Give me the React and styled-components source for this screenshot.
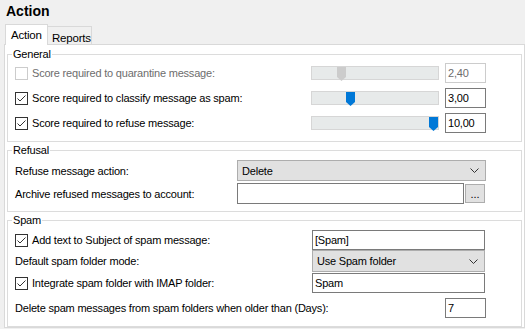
import styled, { createGlobalStyle } from "styled-components";

const GlobalStyle = createGlobalStyle`
  body {
    margin: 0;
    background: #f0f0f0;
    font-family: "Liberation Sans", Arial, sans-serif;
    font-size: 11px;
    letter-spacing: -0.2px;
    color: #000;
  }
`;

const Page = styled.div`
  width: 525px;
  height: 329px;
  overflow: hidden;
`;

const Title = styled.h1`
  margin: 0;
  height: 24px;
  box-sizing: border-box;
  padding: 2px 0 0 6px;
  font-size: 14px;
  font-weight: bold;
  letter-spacing: 0;
  line-height: 18px;
`;

const TabStrip = styled.div`
  display: flex;
  align-items: flex-end;
  height: 20px;
  margin-left: 5px;
`;

const Tab = styled.div`
  position: relative;
  z-index: ${(p) => (p.$active ? 1 : 0)};
  box-sizing: border-box;
  width: ${(p) => p.$w}px;
  height: ${(p) => (p.$active ? 21 : 18)}px;
  margin-bottom: ${(p) => (p.$active ? -1 : 0)}px;
  padding: ${(p) => (p.$active ? "3px 0 0 5px" : "4px 0 0 4px")};
  border: 1px solid #d9d9d9;
  border-bottom: none;
  border-left: ${(p) => (p.$active ? "1px solid #d9d9d9" : "none")};
  background: ${(p) => (p.$active ? "#ffffff" : "#f0f0f0")};
  font-size: 11.5px;
  line-height: 14px;
`;

const Panel = styled.div`
  margin-left: 4px;
  border: 1px solid #d9d9d9;
  background: #ffffff;
  padding: 2px 2px 0 2px;
  display: flex;
  flex-direction: column;
  gap: 1px;
`;

const Group = styled.fieldset`
  margin: 0;
  border: 1px solid #dcdcdc;
  padding: ${(p) => p.$pt}px 35px ${(p) => p.$pb}px 7px;
  min-width: 0;
`;

const Legend = styled.legend`
  margin-left: -3px;
  padding: 0 1px;
  line-height: 14px;
`;

const Rows = styled.div`
  display: flex;
  flex-direction: column;
  gap: ${(p) => p.$gap || 0}px;
`;

const Row = styled.div`
  display: flex;
  align-items: center;
  height: ${(p) => p.$h || 20}px;
  margin-top: ${(p) => p.$mt || 0}px;
`;

const Label = styled.div`
  display: flex;
  align-items: center;
  gap: 4px;
  flex: ${(p) => (p.$w ? "none" : 1)};
  width: ${(p) => (p.$w ? `${p.$w}px` : "auto")};
  white-space: nowrap;
  color: ${(p) => (p.$disabled ? "#6d6d6d" : "#000000")};
`;

const Box = styled.span`
  box-sizing: border-box;
  display: flex;
  width: 13px;
  height: 13px;
  flex: none;
  border: 1px solid ${(p) => (p.$disabled ? "#cccccc" : "#333333")};
  background: #ffffff;
`;

const TextBox = styled.div`
  box-sizing: border-box;
  display: flex;
  align-items: center;
  width: ${(p) => (p.$w ? `${p.$w}px` : "auto")};
  flex: ${(p) => (p.$w ? "none" : 1)};
  height: ${(p) => p.$h || 20}px;
  padding: 0 2px;
  margin-right: ${(p) => p.$mr || 0}px;
  border: 1px solid ${(p) => (p.$disabled ? "#cccccc" : "#7a7a7a")};
  background: #ffffff;
  color: ${(p) => (p.$disabled ? "#6d6d6d" : "#000000")};
`;

const Select = styled.div`
  box-sizing: border-box;
  display: flex;
  align-items: center;
  justify-content: space-between;
  flex: 1;
  height: ${(p) => p.$h}px;
  padding: 0 6px 0 4px;
  margin-right: ${(p) => p.$mr || 0}px;
  border: 1px solid #adadad;
  background: #e1e1e1;
`;

const Browse = styled.div`
  box-sizing: border-box;
  display: flex;
  align-items: flex-end;
  justify-content: center;
  width: 20px;
  height: 19px;
  margin-left: 1px;
  margin-right: 1px;
  padding-bottom: 3px;
  border: 1px solid #adadad;
  background: #e1e1e1;
  line-height: 10px;
  letter-spacing: 0;
`;

const Track = styled.div`
  position: relative;
  box-sizing: border-box;
  width: 128px;
  height: 14px;
  margin-right: 6px;
  border: 1px solid #d6d6d6;
  background: #e7eaea;
`;

const Thumb = styled.svg`
  position: absolute;
  top: 0;
`;

function CheckBox({ checked, disabled }) {
  return (
    <Box $disabled={disabled}>
      {checked && (
        <svg width="11" height="11" viewBox="0 0 11 11">
          <polyline points="1.5,5.5 4,8 9.5,2.5" fill="none" stroke="#333333" strokeWidth="1" />
        </svg>
      )}
    </Box>
  );
}

function Slider({ pos, disabled }) {
  return (
    <Track>
      <Thumb width="9" height="14" viewBox="0 0 9 14" style={{ left: pos }}>
        <polygon points="0,0 9,0 9,10 4.5,14 0,10" fill={disabled ? "#cccccc" : "#0078d7"} />
      </Thumb>
    </Track>
  );
}

function Chevron() {
  return (
    <svg width="9" height="5" viewBox="0 0 9 5">
      <polyline points="0.5,0.5 4.5,4.5 8.5,0.5" fill="none" stroke="#333333" strokeWidth="1" />
    </svg>
  );
}

const scores = [
  { label: "Score required to quarantine message:", value: "2,40", pos: 25, checked: false, disabled: true },
  { label: "Score required to classify message as spam:", value: "3,00", pos: 34, checked: true },
  { label: "Score required to refuse message:", value: "10,00", pos: 117, checked: true },
];

export default function App() {
  return (
    <Page>
      <GlobalStyle />
      <Title>Action</Title>
      <TabStrip>
        <Tab $active $w={43}>Action</Tab>
        <Tab $w={44}>Reports</Tab>
      </TabStrip>
      <Panel>
        <Group $pt={2} $pb={8}>
          <Legend>General</Legend>
          <Rows $gap={5}>
            {scores.map((s) => (
              <Row key={s.label}>
                <Label $disabled={s.disabled}>
                  <CheckBox checked={s.checked} disabled={s.disabled} />
                  {s.label}
                </Label>
                <Slider pos={s.pos} disabled={s.disabled} />
                <TextBox $w={41} $disabled={s.disabled}>{s.value}</TextBox>
              </Row>
            ))}
          </Rows>
        </Group>

        <Group $pt={3} $pb={7}>
          <Legend>Refusal</Legend>
          <Rows $gap={2}>
            <Row $h={21}>
              <Label $w={222}>Refuse message action:</Label>
              <Select $h={21}>
                Delete
                <Chevron />
              </Select>
            </Row>
            <Row $h={21}>
              <Label $w={222}>Archive refused messages to account:</Label>
              <TextBox $h={21} />
              <Browse>...</Browse>
            </Row>
          </Rows>
        </Group>

        <Group $pt={3} $pb={8}>
          <Legend>Spam</Legend>
          <Rows>
            <Row>
              <Label $w={297}>
                <CheckBox checked />
                Add text to Subject of spam message:
              </Label>
              <TextBox $mr={1}>[Spam]</TextBox>
            </Row>
            <Row $h={22}>
              <Label $w={297}>Default spam folder mode:</Label>
              <Select $h={22} $mr={1}>
                Use Spam folder
                <Chevron />
              </Select>
            </Row>
            <Row $mt={1}>
              <Label $w={297}>
                <CheckBox checked />
                Integrate spam folder with IMAP folder:
              </Label>
              <TextBox $mr={1}>Spam</TextBox>
            </Row>
            <Row $mt={5}>
              <Label>Delete spam messages from spam folders when older than (Days):</Label>
              <TextBox $w={41}>7</TextBox>
            </Row>
          </Rows>
        </Group>
      </Panel>
    </Page>
  );
}
